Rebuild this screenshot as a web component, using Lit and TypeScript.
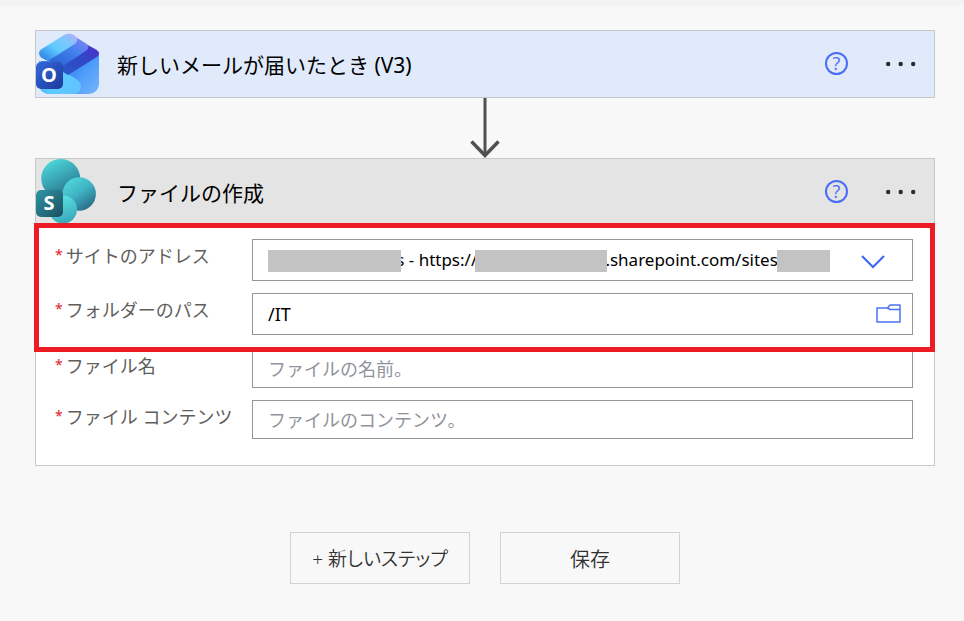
import { LitElement, html, css, svg } from "lit";
import { customElement, property } from "lit/decorators.js";

const NB = "\u00a0";
const siteText = `${NB.repeat(29)}s - https://${NB.repeat(29)}.sharepoint.com/sites/`;

const outlookIcon = html`
  <svg class="logo" viewBox="0 0 64 64" width="64" height="64" aria-hidden="true">
    <defs>
      <linearGradient id="o-body" x1="0.35" y1="0.4" x2="1" y2="0.8">
        <stop offset="0" stop-color="#3a78ea" />
        <stop offset="0.5" stop-color="#4d9cfb" />
        <stop offset="1" stop-color="#6fb0fb" />
      </linearGradient>
      <linearGradient id="o-flap" x1="0" y1="0" x2="1" y2="0.5">
        <stop offset="0" stop-color="#3fa8ee" />
        <stop offset="0.6" stop-color="#5bcbfe" />
        <stop offset="1" stop-color="#62c4ff" />
      </linearGradient>
      <linearGradient id="o-top" x1="0" y1="1" x2="1" y2="0">
        <stop offset="0.1" stop-color="#3187e8" />
        <stop offset="0.45" stop-color="#5fcbff" />
        <stop offset="0.7" stop-color="#7cc8fc" />
        <stop offset="1" stop-color="#bcaaf8" />
      </linearGradient>
      <linearGradient id="o-mid" x1="0" y1="1" x2="1" y2="0">
        <stop offset="0.2" stop-color="#2f66d8" />
        <stop offset="0.6" stop-color="#4383ee" />
        <stop offset="1" stop-color="#9080fb" />
      </linearGradient>
      <linearGradient id="o-low" x1="0" y1="1" x2="1" y2="0">
        <stop offset="0.2" stop-color="#2a55c4" />
        <stop offset="0.6" stop-color="#3048c6" />
        <stop offset="1" stop-color="#5428d0" />
      </linearGradient>
      <linearGradient id="o-badge" x1="0" y1="0" x2="1" y2="1">
        <stop offset="0" stop-color="#3468dc" />
        <stop offset="1" stop-color="#1c3a9c" />
      </linearGradient>
    </defs>
    <path fill="url(#o-body)" d="M5 30 L32 30 L63 22 V53 A10 10 0 0 1 53 63 H13 A10 10 0 0 1 3 53Z" />
    <path fill="url(#o-flap)" d="M3 30 L18 34 L40 48 Q45 51 45 56 Q44 63 36 63 H13 A10 10 0 0 1 3 53Z" />
    <path fill="url(#o-low)" d="M48 12 L60 18.500 Q66 22.500 60 26.500 L32 44 L14 33Z" />
    <path fill="url(#o-mid)" d="M38 5 L50 12.500 Q55 16.500 49 20.500 L27 35 L8 28Z" />
    <path fill="url(#o-top)" d="M28 4 Q33 1 38 4 Q44 8 39.500 12.500 L12 30 L5 26.500 Q1 22 5 18.500Z" />
    <rect x="0" y="31" width="27" height="27" rx="5" fill="url(#o-badge)" />
    <text class="mark" x="13" y="51" text-anchor="middle">O</text>
  </svg>
`;

const sharepointIcon = html`
  <svg class="logo" viewBox="0 0 64 64" width="64" height="64" aria-hidden="true">
    <defs>
      <linearGradient id="s-one" x1="0.2" y1="0" x2="0.7" y2="1">
        <stop offset="0" stop-color="#4ddcdc" />
        <stop offset="0.5" stop-color="#3aa3b2" />
        <stop offset="1" stop-color="#2a6785" />
      </linearGradient>
      <linearGradient id="s-two" x1="0.1" y1="0" x2="0.8" y2="1">
        <stop offset="0" stop-color="#52dddc" />
        <stop offset="0.5" stop-color="#3fb2c3" />
        <stop offset="1" stop-color="#286482" />
      </linearGradient>
      <linearGradient id="s-three" x1="0.3" y1="0" x2="0.7" y2="1">
        <stop offset="0" stop-color="#5ee6e4" />
        <stop offset="1" stop-color="#36a5b8" />
      </linearGradient>
      <linearGradient id="s-badge" x1="0" y1="0" x2="1" y2="1">
        <stop offset="0" stop-color="#2f96a4" />
        <stop offset="1" stop-color="#1b4e62" />
      </linearGradient>
    </defs>
    <circle cx="24.700" cy="19.500" r="19.500" fill="url(#s-one)" />
    <circle cx="43.200" cy="35" r="16.700" fill="url(#s-two)" />
    <circle cx="27" cy="50.500" r="14" fill="url(#s-three)" />
    <rect x="0" y="31" width="27" height="27" rx="5" fill="url(#s-badge)" />
    <text class="mark" x="13" y="51" text-anchor="middle">S</text>
  </svg>
`;

const base = css`
  * {
    box-sizing: border-box;
  }
  button,
  input,
  select {
    font: inherit;
    color: inherit;
    margin: 0;
    border-radius: 0;
  }
`;

@customElement("step-header")
class StepHeader extends LitElement {
  @property() heading = "";
  @property() kind = "";

  static styles = [
    base,
    css`
      :host {
        display: flex;
        align-items: center;
        height: 66px;
        padding-right: 18px;
      }
      .logo {
        display: block;
        flex: none;
        align-self: flex-start;
      }
      .mark {
        font: bold 20px "Open Sans", sans-serif;
        fill: #fff;
      }
      h2 {
        flex: 1;
        margin: 0 0 0 17px;
        padding-top: 2px;
        font-size: 21px;
        line-height: 32px;
        font-weight: 400;
        color: #000;
      }
      button {
        flex: none;
        height: 24px;
        margin-bottom: 1px;
        padding: 0;
        border: 0;
        background: none;
      }
      .help {
        width: 23px;
        height: 23px;
        border: 2px solid #4a6cf7;
        border-radius: 50%;
        color: #4a6cf7;
        font-family: "Open Sans", "Noto Sans", sans-serif;
        font-size: 18px;
        font-weight: 400;
        line-height: 19px;
        text-align: center;
      }
      .more {
        width: 30px;
        margin-left: 38px;
      }
      .more svg {
        display: block;
      }
    `,
  ];

  render() {
    return html`
      ${this.kind === "mail" ? outlookIcon : sharepointIcon}
      <h2>${this.heading}</h2>
      <button class="help" type="button">?</button>
      <button class="more" type="button" aria-label="メニュー">
        <svg viewBox="0 0 30 24" width="30" height="24" fill="#2b2a29">
          ${[2.2, 14.7, 27.2].map((x) => svg`<circle cx=${x} cy="12" r="2.200" />`)}
        </svg>
      </button>
    `;
  }
}

@customElement("app-root")
class AppRoot extends LitElement {
  static styles = [
    base,
    css`
      :host {
        display: block;
        min-height: 100vh;
        background: #f8f8f8;
        border-top: 6px solid #f3f3f3;
        box-sizing: border-box;
        padding: 24px 29px 36px 35px;
        font-family: "Noto Sans", "Noto Sans CJK JP", sans-serif;
        font-size: 18px;
        color: #000;
      }
      .card {
        border: 1px solid #c8c8c8;
        background: #fff;
      }
      .trigger {
        background: #e1eafa;
      }
      .arrow {
        display: block;
        margin: 0 auto;
      }
      .bar {
        background: #e4e4e4;
      }
      .fields {
        display: grid;
        gap: 12px;
        padding: 14px 21px 26px 19px;
      }
      .marked {
        position: relative;
        display: grid;
        gap: 12px;
        padding-bottom: 2px;
      }
      .marked::after {
        content: "";
        position: absolute;
        inset: -16px -22px -15px -21px;
        border: 5px solid #ed1c24;
        pointer-events: none;
        z-index: 1;
      }
      .row {
        display: grid;
        grid-template-columns: 197px 1fr;
        align-items: center;
      }
      .row label {
        display: flex;
        align-self: start;
        gap: 3px;
        padding-top: 4px;
        line-height: 27px;
        color: #605e5c;
        white-space: nowrap;
      }
      .row label b {
        font-size: 14px;
        line-height: 24px;
        font-weight: 400;
        color: #e0202a;
      }
      .control {
        position: relative;
        min-width: 0;
      }
      .control input,
      .control select {
        display: block;
        width: 100%;
        height: 39px;
        padding: 0 15px;
        border: 1px solid #979593;
        background: #fff;
        appearance: none;
        outline: 0;
      }
      .marked input,
      .marked select {
        height: 42px;
      }
      .marked select {
        padding-bottom: 2px;
        font-size: 17px;
      }
      input::placeholder {
        color: #8f949c;
        opacity: 1;
      }
      .mask {
        position: absolute;
        top: 11px;
        height: 22px;
        background: #c3c3c3;
      }
      .name {
        left: 16px;
        width: 133px;
      }
      .tenant {
        left: 223px;
        width: 132px;
      }
      .site {
        left: 525px;
        width: 53px;
      }
      .chevron {
        position: absolute;
        top: 9px;
        right: 28px;
        pointer-events: none;
      }
      .browse {
        position: absolute;
        top: 9px;
        right: 12px;
        padding: 0;
        border: 0;
        background: none;
      }
      .browse svg {
        display: block;
      }
      .actions {
        display: flex;
        justify-content: center;
        gap: 30px;
        margin-top: 66px;
      }
      .actions button {
        width: 180px;
        height: 52px;
        padding: 0;
        border: 1px solid #d2d2d2;
        background: #f8f8f8;
        color: #323130;
        font-size: 20px;
        font-weight: 350;
      }
      .actions .add {
        font-size: 19px;
        font-feature-settings: "palt";
      }
    `,
  ];

  private caption(id: string, text: string) {
    return html`<label for=${id}><b>*</b>${text}</label>`;
  }

  private textRow(id: string, label: string, placeholder: string) {
    return html`
      <div class="row">
        ${this.caption(id, label)}
        <div class="control"><input id=${id} type="text" placeholder=${placeholder} /></div>
      </div>
    `;
  }

  render() {
    return html`
      <section class="card trigger">
        <step-header kind="mail" heading="新しいメールが届いたとき (V3)"></step-header>
      </section>
      <svg class="arrow" viewBox="0 0 30 60" width="30" height="60" fill="none" stroke="#505050">
        <path stroke-width="3" d="M15 0V57" />
        <path stroke-width="3.500" d="M1.500 43.500L15 57.500L28.500 43.500" />
      </svg>
      <section class="card">
        <step-header class="bar" kind="site" heading="ファイルの作成"></step-header>
        <div class="fields">
          <div class="marked">
            <div class="row">
              ${this.caption("site", "サイトのアドレス")}
              <div class="control">
                <select id="site">
                  <option>${siteText}</option>
                </select>
                <span class="mask name"></span>
                <span class="mask tenant"></span>
                <span class="mask site"></span>
                <svg class="chevron" viewBox="0 0 24 24" width="24" height="24" fill="none" stroke="#3b66f5" stroke-width="2">
                  <path d="M1 8L12 19L23 8" />
                </svg>
              </div>
            </div>
            <div class="row">
              ${this.caption("folder", "フォルダーのパス")}
              <div class="control">
                <input id="folder" type="text" value="/IT" />
                <button class="browse" type="button" aria-label="フォルダーの選択">
                  <svg viewBox="0 0 25 24" width="25" height="24" fill="none" stroke="#4a72f8" stroke-width="1.500" stroke-linejoin="round">
                    <path d="M1 6H11.500L14 3H24V20H1ZM11.500 6L14 7.500H24" />
                  </svg>
                </button>
              </div>
            </div>
          </div>
          ${this.textRow("name", "ファイル名", "ファイルの名前。")}
          ${this.textRow("content", "ファイル コンテンツ", "ファイルのコンテンツ。")}
        </div>
      </section>
      <div class="actions">
        <button class="add" type="button">+ 新しいステップ</button>
        <button type="button">保存</button>
      </div>
    `;
  }
}
